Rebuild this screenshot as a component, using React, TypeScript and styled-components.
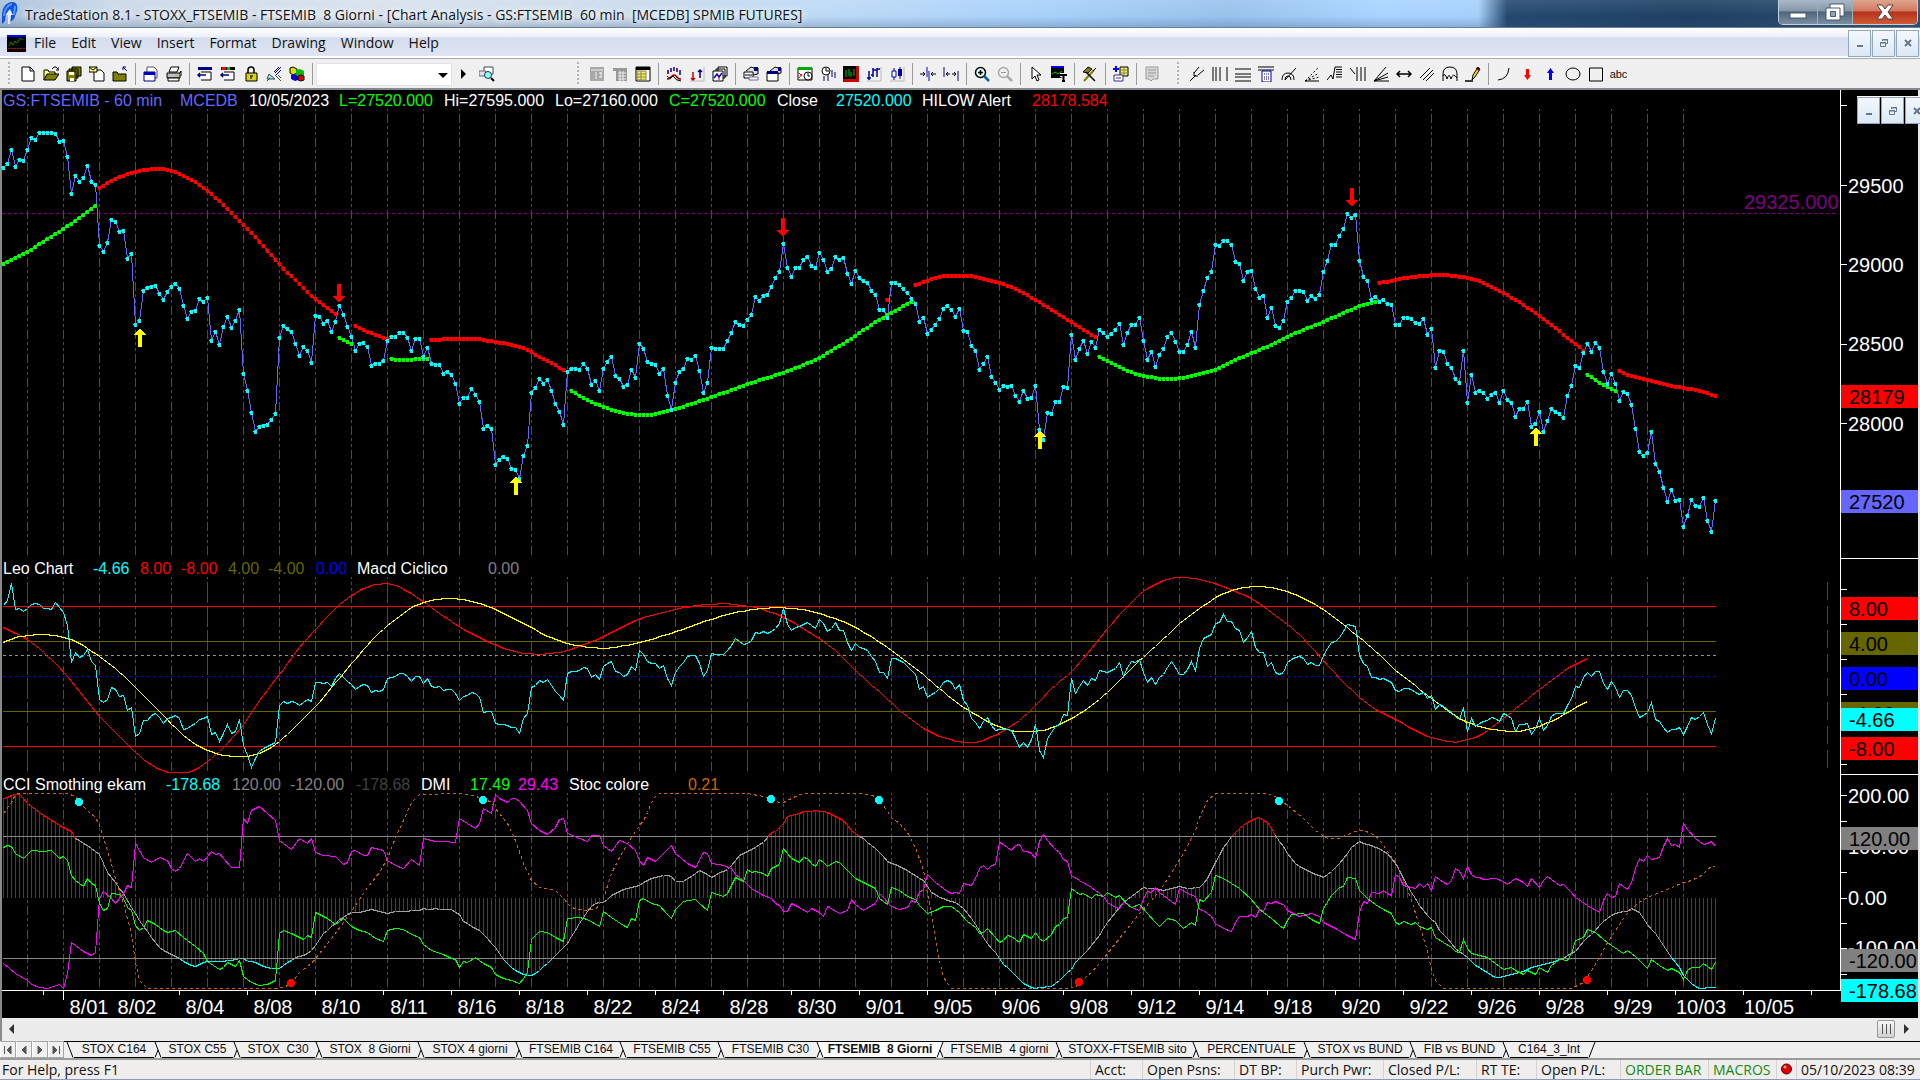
import React from "react";
import styled, { createGlobalStyle, css } from "styled-components";

/* ------------------------------------------------------------------ */
/* Theme values                                                        */
/* ------------------------------------------------------------------ */

const UI_FONT = '"Open Sans", "Noto Sans", sans-serif';
const CHART_FONT = '"Liberation Sans", Arial, sans-serif';

const GlobalStyle = createGlobalStyle`
  *, *::before, *::after { box-sizing: border-box; }
  body { margin: 0; background: #f0f0f0; font-family: ${UI_FONT}; font-size: 14px; color: #111; }
  button, select { font: inherit; color: inherit; border: 0; padding: 0; margin: 0; background: none; }
  svg { display: block; }
`;

/* ------------------------------------------------------------------ */
/* Market data: one value per 60 minute bar                            */
/* ------------------------------------------------------------------ */

const BAR = 4;
const FIRST = 1;
const xOf = (i: number) => FIRST + i * BAR + 0.5;

const nums = (s: string) => s.trim().split(/\s+/).map(Number);

type Knot = [number, number];
const knots = (s: string): Knot[] =>
  s
    .trim()
    .split(/\s+/)
    .map((p) => p.split(":").map(Number) as Knot);

const linear = (k: Knot[]): Knot[] => {
  const out: Knot[] = [];
  for (let n = 0; n < k.length - 1; n++) {
    const [a, va] = k[n];
    const [b, vb] = k[n + 1];
    for (let i = a; i < b; i++) out.push([i, va + ((vb - va) * (i - a)) / (b - a)]);
  }
  out.push(k[k.length - 1]);
  return out;
};

const smooth = (k: Knot[]): Knot[] => {
  if (k.length < 3) return linear(k);
  const slope = k.map((_, n) => {
    const a = k[Math.max(0, n - 1)];
    const b = k[Math.min(k.length - 1, n + 1)];
    return (b[1] - a[1]) / (b[0] - a[0]);
  });
  const out: Knot[] = [];
  const last = k[k.length - 1][0];
  let n = 0;
  for (let i = k[0][0]; i <= last; i++) {
    while (n < k.length - 2 && i > k[n + 1][0]) n++;
    const h = k[n + 1][0] - k[n][0];
    const t = (i - k[n][0]) / h;
    const v =
      (2 * t ** 3 - 3 * t ** 2 + 1) * k[n][1] +
      (t ** 3 - 2 * t ** 2 + t) * h * slope[n] +
      (-2 * t ** 3 + 3 * t ** 2) * k[n + 1][1] +
      (t ** 3 - t ** 2) * h * slope[n + 1];
    out.push([i, v]);
  }
  return out;
};

const CLOSE = nums(`
501 489 447 498 477 480 447 411 417 396 396 396 396 399 422 420 468 579 525 543 531 495 543 552 735 753 726 657 663 693
690 774 759 972 960 870 861 858 855 879 897 873 858 849 864 915 954 933 930 894 903 891 1020 993 1032 977 947 981 960 927
1118 1169 1236 1293 1278 1275 1272 1256 1239 1010 975 983 993 1029 1065 1038 1050 1086 945 948 969 960 993 963 915 942 978 1007 1050 1028
1026 1038 1095 1089 1089 1080 1020 1007 1007 995 995 1010 1050 1014 1014 1068 1040 1089 1092 1092 1119 1113 1122 1149 1209 1191 1191 1164 1182 1202
1284 1275 1284 1392 1377 1368 1374 1404 1407 1434 1365 1335 1175 1161 1134 1149 1137 1169 1209 1233 1272 1113 1104 1104 1107 1089 1104 1152 1140 1170
1104 1083 1068 1125 1134 1158 1152 1107 1131 1029 1044 1083 1089 1092 1119 1104 1185 1227 1146 1113 1104 1074 1077 1065 1110 1176 1146 1041 1044 1044
1044 1020 996 963 972 975 957 942 888 900 885 882 858 831 813 729 801 828 801 801 777 768 795 801 756 777 813 804 768 777
771 819 849 810 831 840 846 870 882 927 927 951 846 846 852 864 876 894 909 963 951 999 987 972 954 924 915 927 948 924
990 993 1035 1050 1107 1089 1068 1128 1146 1167 1155 1158 1155 1185 1203 1170 1194 1191 1155 1287 1317 1236 1239 1203 1203 1158 1161 1002 1077 1044
1020 1059 1023 1041 987 996 1008 999 987 969 1032 996 972 972 951 1020 1077 1053 1098 1062 1044 1008 996 1023 1053 1053 1032 993 1041 912
870 831 813 732 735 720 720 732 783 789 840 813 810 864 891 885 951 921 975 981 960 903 891 870 870 873 900 885 894 882
813 780 732 732 705 684 639 651 642 780 828 840 897 888 903 897 909 912 972 972 950 950 953 966 969 954 1002 984 1101 1050
1053 1089 1101 1134 1146 1050 1206 1122 1176 1170 1176 1194 1182 1176 1206 1170 1197 1206 1248 1224 1224 1203 1278 1269 1233 1293 1260 1224 1233 1239
1251 1185 1155 1095 1101 1056 1029 1053 1026 1041 1113 1149 1119 1149 1200 1173 1179 1212 1284 1353 1365 1356 1293 1389 1413 1461 1503 1467 1500 1497
1578 1545 1497 1515 1518 1491 1560 1593 1500`);

const HILOW: { color: string; k: string }[] = [
  { color: "#00ff00", k: "0:789 6:753 10:722 15:684 19:651 23:615" },
  { color: "#ff0000", k: "24:561 28:534 33:513 38:504 42:510 46:530 51:570 56:624 60:672 65:735 69:790 73:838 78:894 83:939" },
  { color: "#00ff00", k: "84:1010 85:1017 86:1023 87:1029" },
  { color: "#ff0000", k: "88:974 90:987 92:996 94:1005 96:1014" },
  { color: "#00ff00", k: "97:1074 99:1077 102:1077 103:1074 106:1074" },
  { color: "#ff0000", k: "107:1017 109:1017 111:1014 118:1014 123:1023 127:1032 130:1042 134:1068 138:1092 140:1108" },
  {
    color: "#00ff00",
    k: "142:1170 147:1203 152:1226 158:1242 161:1242 163:1239 168:1224 173:1205 180:1176 188:1142 195:1115 200:1092 204:1071 209:1035 213:1005 217:972 222:936 227:903",
  },
  { color: "#ff0000", k: "221:897 221:897" },
  { color: "#ff0000", k: "228:852 233:831 236:825 241:825 245:834 250:850 254:870 258:897 263:933 268:972 273:1008" },
  {
    color: "#00ff00",
    k: "274:1068 277:1085 281:1110 285:1124 290:1134 293:1134 297:1125 303:1107 309:1072 315:1042 321:1008 325:987 330:963 335:936 340:912 343:903",
  },
  { color: "#ff0000", k: "344:846 348:837 352:828 359:822 362:824 366:831 370:846 375:876 380:912 385:953 390:1001 395:1049" },
  { color: "#00ff00", k: "396:1121 398:1137 400:1152 403:1170" },
  { color: "#ff0000", k: "404:1110 407:1125 411:1137 416:1152 420:1161 424:1170 428:1185" },
];

const LEO = nums(`
150 135 83 162 160 167 160 147 145 147 160 160 163 142 157 170 210 322 290 305 300 282 318 330 432 442 433 397 403 423
420 465 455 543 535 495 495 480 475 487 505 490 485 480 490 523 520 510 505 493 489 484 537 530 558 535 508 535 528 493
570 600 637 610 587 580 574 566 560 450 437 443 437 440 450 442 433 438 382 380 385 380 393 370 353 365 377 386 403 393
388 390 412 406 407 403 370 365 363 355 355 362 378 362 362 385 370 394 395 392 405 402 403 415 435 423 420 410 415 425
470 467 467 503 506 506 510 515 517 535 490 475 397 390 375 380 373 390 407 420 436 353 347 347 345 335 340 366 358 372
333 325 317 347 350 363 358 333 345 285 298 318 324 325 338 330 370 390 350 333 322 302 301 300 325 363 345 295 298 296
296 285 270 250 257 267 265 255 232 233 229 235 227 218 205 160 207 226 217 214 207 202 210 220 193 205 228 220 200 225
225 262 285 265 276 278 286 302 318 350 352 370 310 310 315 322 333 345 358 403 393 427 417 410 400 380 375 382 402 388
435 450 490 500 520 497 485 510 526 523 523 523 525 550 575 560 577 553 508 585 607 550 530 513 508 477 481 370 415 392
374 390 370 376 345 349 351 345 338 320 362 335 319 322 312 352 382 367 387 365 357 335 317 337 356 356 343 317 346 280
250 242 237 203 200 178 198 197 218 225 260 245 229 275 292 292 333 322 350 358 350 320 312 305 304 310 328 322 330 331
300 280 260 258 245 228 208 210 214 300 325 332 367 365 373 370 375 380 405 409 398 398 403 412 418 410 430 420 463 448
453 462 470 483 493 455 528 490 512 503 498 495 487 490 497 475 480 490 528 508 508 505 537 520 490 525 510 483 475 473
475 450 430 393 396 367 352 363 347 347 383 401 379 396 427 406 406 420 457 487 481 470 440 492 498 516 532 523 523 515
537 512 486 491 483 472 508 535 488`);

const CYCLE_FAST = knots(`0:216 6:252 11:302 16:363 20:423 24:483 29:543 33:591 37:628 41:650 44:652 47:647 51:618 55:575
60:507 64:436 69:357 74:276 78:222 83:159 87:121 91:95 95:85 98:89 101:108 106:147 110:182 115:221 120:251 123:268 127:286
132:295 137:294 141:284 146:264 150:243 155:212 159:191 163:177 168:162 173:151 180:145 186:152 190:163 195:185 201:227
206:266 211:320 215:367 220:420 225:474 231:526 236:550 241:562 245:554 250:526 254:494 258:450 262:400 267:348 272:280
276:220 281:152 285:109 289:80 293:67 297:68 301:78 306:98 312:130 315:152 318:180 321:207 325:250 330:316 335:380 340:435
344:468 350:505 355:538 360:554 363:560 366:553 370:533 375:490 380:440 385:394 391:340 396:308`);

const CYCLE_SLOW = knots(`0:262 2:251 5:242 9:238 13:240 17:253 20:271 24:304 29:350 33:396 38:456 43:517 48:566 53:593 59:604
63:597 68:567 72:524 78:453 83:382 87:325 92:256 96:211 100:173 103:151 107:134 112:130 116:134 121:152 126:179 132:217
137:247 142:266 147:276 151:278 156:269 160:258 168:229 176:195 183:172 189:160 194:157 200:163 204:175 208:190 213:216
219:260 224:304 230:358 235:409 240:455 246:497 251:522 256:529 260:524 264:507 269:475 274:431 279:375 285:305 290:250
295:194 300:151 304:120 308:102 312:94 315:94 319:101 323:118 326:134 330:163 335:208 340:256 345:308 348:344 352:381
357:430 361:465 365:494 369:513 375:526 379:527 384:512 389:485 393:457 396:438`);

const CCI = linear(
  knots(`0:85 3:72 4:72 6:98 9:127 12:150 15:172 17:182 18:203 21:225 24:252 26:305 28:335 30:370 31:390 33:430 35:468 37:500
39:532 42:552 44:565 46:580 48:589 50:576 51:572 54:573 57:570 60:563 61:572 63:575 65:588 67:595 69:593 71:575 73:562 75:555
77:540 78:525 80:490 82:468 84:448 86:433 87:427 89:427 92:418 94:422 96:430 98:423 104:420 105:413 106:418 108:415 112:417
114:432 115:453 117:467 119:480 121:505 123:530 125:568 127:590 129:607 131:616 132:615 134:600 137:568 140:530 141:518
143:480 145:440 147:408 148:398 150:395 152:376 155:357 159:345 160:335 162:323 165:315 167:317 168:333 170:333 172:317
174:300 175:305 177:321 179:307 181:297 183:270 184:255 187:237 190:215 192:187 193:182 195:160 196:137 198:132 200:123
203:121 206:126 208:138 210:150 212:180 215:205 217:225 219:245 221:272 223:283 226:300 228:315 230:330 232:365 234:380
236:390 238:396 240:415 242:445 244:480 246:520 248:545 249:565 250:582 252:602 255:640 257:650 258:653 260:650 262:648
264:630 266:605 267:597 268:575 271:540 274:495 276:455 278:425 280:397 282:378 284:360 285:352 287:353 290:360 294:349
296:355 298:350 299:350 301:325 303:275 305:232 307:198 309:175 311:155 313:145 314:142 316:155 317:175 319:212 320:228
321:250 323:280 326:300 328:312 330:320 332:303 334:280 336:250 337:230 339:214 341:221 344:235 346:248 348:278 350:323
352:365 354:405 356:435 358:457 359:480 361:503 363:535 366:562 368:585 371:607 373:621 375:619 378:610 380:603 382:590
385:582 387:577 390:563 393:542 395:513 398:480 400:452 402:435 404:425 406:423 407:414 409:427 411:462 413:490 415:525
417:560 419:590 420:615 422:640 424:655 426:650 428:651`)
);

const DMI_MINUS = knots(`0:580 3:610 6:630 7:642 9:650 11:653 14:643 15:655 16:610 17:515 18:525 20:543 22:556 23:545 24:385
25:362 27:383 28:398 30:370 31:345 32:350 33:220 35:260 37:275 39:262 41:270 42:295 43:303 44:295 46:248 48:272 49:265 50:273
52:242 53:252 54:248 55:265 57:290 59:292 60:145 61:160 62:120 64:107 66:130 68:150 69:210 72:236 74:205 76:220 77:205 78:245
80:254 83:257 85:283 86:275 87:243 88:240 90:255 91:255 92:230 95:240 96:270 98:285 100:295 102:268 104:285 105:205 108:212
110:213 113:217 114:145 116:160 118:175 119:160 120:115 122:130 123:72 124:85 126:97 127:83 128:83 129:93 131:120 132:160
134:180 136:193 138:170 139:148 140:145 141:188 144:203 146:213 147:195 149:195 150:225 152:243 154:210 156:220 158:240
159:270 160:285 161:260 163:273 165:248 167:225 168:250 171:280 173:291 175:245 176:250 177:280 180:286 182:295 183:312
185:330 187:355 190:375 192:385 193:400 194:405 195:422 196:422 197:398 199:410 201:426 202:415 204:425 205:438 206:408
209:428 211:420 212:388 213:402 215:421 217:405 218:400 219:368 220:380 222:408 224:418 226:410 227:390 228:395 229:362
230:360 231:312 233:335 236:363 237:370 238:365 239:368 240:338 242:345 243:325 244:293 245:285 246:298 247:285 248:283
249:215 250:222 252:240 253:225 254:222 255:243 256:243 257:250 258:264 259:213 260:193 261:210 263:238 264:245 265:268
266:273 267:315 269:330 272:352 275:378 276:395 278:410 279:413 280:395 281:400 282:410 284:420 285:385 286:363 287:367
288:350 289:365 291:385 293:403 294:353 296:370 298:378 299:418 300:420 302:437 303:460 305:473 307:483 308:455 309:437
311:437 312:432 313:442 314:418 315:423 316:397 317:400 318:392 319:398 320:402 321:420 324:437 327:428 329:438 330:455
333:475 336:495 338:507 339:425 340:393 341:400 342:365 344:368 345:360 346:368 347:375 348:313 349:322 350:345 353:353
354:340 355:350 356:340 357:360 358:317 360:335 361:343 362:330 363:293 364:303 365:325 366:288 367:313 368:320 369:320
370:328 373:323 375:333 376:343 378:323 380:335 381:348 382:325 384:350 385:330 386:317 388:335 389:345 390:343 392:365
393:380 396:405 399:425 400:390 401:370 402:380 403:378 404:340 405:348 406:358 407:335 408:295 409:265 410:273 411:255
412:267 414:260 415:228 416:205 417:225 418:223 419:230 420:160 421:178 423:203 425:222 426:220 427:212 428:227`);

const DMI_PLUS = knots(`0:230 1:225 2:228 3:250 5:263 7:240 10:243 12:240 14:265 15:257 16:270 17:315 18:330 20:347 21:325 22:340
23:345 24:400 25:420 26:415 27:370 29:372 30:385 31:410 32:420 33:465 34:480 35:472 36:450 38:463 40:480 41:487 43:480 45:500
48:528 50:550 51:572 54:598 55:592 56:575 58:587 59:570 60:618 62:635 64:645 66:643 68:630 69:490 70:480 72:488 75:507 76:495
77:500 78:427 81:445 83:463 85:445 87:467 89:480 91:485 93:503 95:512 96:480 98:475 100:478 102:492 104:500 105:523 107:540
110:553 112:565 113:567 114:590 115:573 116:577 118:562 120:580 122:590 123:612 125:625 127:630 129:638 130:625 131:607
132:507 134:483 136:487 138:500 140:512 141:445 144:440 146:447 149:467 150:422 152:440 155:465 156:470 157:445 158:450
159:390 160:385 162:400 164:405 166:432 167:443 168:418 170:393 173:387 174:400 176:421 177:365 180:377 181:370 183:320
185:333 186:298 187:305 188:303 190:310 191:317 192:295 194:283 195:235 196:250 197:265 199:275 200:260 201:265 202:280
203:287 204:268 205:275 206:288 208:273 209:275 211:300 213:325 216:342 218:355 219:385 221:402 222:352 224:360 226:378
228:387 229:405 231:430 233:420 235:407 237:408 239:425 241:453 243:470 244:490 245:487 246:475 248:500 249:515 250:510
251:495 252:497 254:515 255:493 257:505 258:487 259:503 260:513 262:493 263:467 264:463 265:445 266:442 267:353 269:373
270:370 272:383 273:373 275:378 276:367 278:382 279:375 281:403 282:410 284:403 286:430 288:455 289:467 291:443 293:450
295:475 297:455 298:465 299:387 300:393 302:365 303:315 305:325 307:338 309:355 312:388 314:418 317:445 319:465 320:475
321:450 322:432 325:430 327:448 329:460 330:415 332:375 334:350 335:348 336:320 338:323 339:360 341:385 343:403 345:418
347:430 348:455 349:463 350:453 352:462 353:455 354:468 356:477 357:470 358:500 360:515 362:530 363:542 364:545 365:507
366:535 367:548 370:558 371:560 373:580 375:598 377:590 378:600 380:613 381:600 383:613 384:590 386:605 387:585 389:568
391:570 392:550 393:510 395:500 396:477 398:487 400:507 402:525 405:550 406:540 408:557 411:595 412:568 414:585 416:600
417:595 419:605 420:628 421:600 422:590 424:592 425:580 427:598 428:575`);

const STOC = knots(`0:130 2:95 3:72 4:70 16:70 18:78 19:97 21:120 23:140 24:165 26:240 28:325 30:400 32:490 33:575 34:630 36:655
68:655 70:652 72:638 74:605 77:580 79:550 82:505 85:455 88:405 91:350 94:305 96:265 98:200 100:150 102:95 104:71 114:70
117:75 120:83 122:95 123:115 126:160 128:210 130:280 132:330 134:350 138:360 140:385 142:410 145:420 148:418 150:385 152:310
154:260 156:220 159:165 160:150 161:125 162:95 163:78 164:70 186:70 190:77 192:87 194:95 195:97 197:85 199:72 202:70 213:70
216:73 218:77 220:105 222:140 224:160 226:185 228:230 230:300 231:370 232:430 233:500 234:570 235:620 237:655 266:655
268:650 269:637 272:605 275:565 278:520 281:475 284:430 287:390 290:345 292:305 295:250 298:180 299:140 301:90 303:70
316:70 319:83 320:95 322:115 325:145 328:180 331:205 334:203 336:193 338:182 340:180 342:190 344:208 346:242 348:275
350:325 352:390 354:465 356:540 357:600 358:630 360:655 392:655 395:637 397:600 399:560 401:515 403:480 405:445 407:415
409:395 411:380 414:365 417:350 420:337 422:330 425:312 426:295 427:290 428:288`);

/* Each study has its own vertical scale: three data units to a pixel. */
const scale = (offset: number) => (v: number) => Math.round(v / 3 - offset) + 0.5;
const priceY = scale(109);
const leoY = scale(22);
const cciY = scale(23);

const path = (pts: Knot[], y: (v: number) => number) =>
  "M" + pts.map(([i, v]) => `${xOf(i)} ${y(v)}`).join("L");
const indexed = (v: number[]): Knot[] => v.map((n, i) => [i, n]);

const sessions = Array.from({ length: 47 }, (_, n) => 25.5 + n * 36);
const weeks = Array.from({ length: 11 }, (_, n) => 25.5 + n * 180);
const LAST_X = xOf(428);

/* ------------------------------------------------------------------ */
/* Frame                                                               */
/* ------------------------------------------------------------------ */

const Frame = styled.div`
  display: flex;
  flex-direction: column;
  min-height: 100vh;
  overflow: hidden;
`;

const TitleBar = styled.header`
  display: flex;
  align-items: center;
  height: 28px;
  padding-left: 1px;
  border-bottom: 1px solid #6d7f92;
  background: linear-gradient(to bottom, rgba(255, 255, 255, 0.1), transparent 60%, rgba(50, 80, 120, 0.25)),
    linear-gradient(
      to right,
      #a9c0da 0,
      #c9d8e8 6%,
      #d8e2ec 20%,
      #c8daec 34%,
      #bcdaf6 43%,
      #a6d0fa 55%,
      #98c2ec 64%,
      #a8d4ff 72%,
      #a5d0fb 77%,
      #24496e 78.5%,
      #1d4063 88%,
      #2b5070 100%
    );
`;

const AppTitle = styled.h1`
  flex: 1;
  margin: 0;
  padding: 2px 0 0 7px;
  font-size: 14px;
  font-weight: 400;
  line-height: 26px;
  white-space: pre;
  color: #0c1218;
  text-shadow: 0 0 6px #fff, 0 0 8px #fff;
`;

const CaptionGroup = styled.div`
  display: flex;
  align-self: flex-start;
  height: 25px;
  margin-right: 2px;
  border: 1px solid #c4d0da;
  border-top: 0;
  border-radius: 0 0 5px 5px;
  overflow: hidden;
`;

const CaptionButton = styled.button<{ $w: number; $close?: boolean }>`
  display: grid;
  place-items: center;
  width: ${(p) => p.$w}px;
  border-right: 1px solid #9fb0be;
  background: ${(p) =>
    p.$close
      ? "linear-gradient(#e0a48e, #d07a5e 45%, #b5331c 50%, #cf5a34)"
      : "linear-gradient(#a8b8c6, #8598aa 45%, #4e657b 50%, #7b8fa2)"};
  &:last-child { border-right: 0; }
`;

const MenuBar = styled.nav`
  display: flex;
  align-items: center;
  height: 31px;
  padding-left: 7px;
  border-bottom: 1px solid #a7abb2;
  background: linear-gradient(#fff, #eef1f9 28%, #d5dcee 34%, #dfe5f4 94%, #fff 95%);
`;

const MenuList = styled.ul`
  display: flex;
  flex: 1;
  gap: 15px;
  margin: 0;
  padding: 0 0 0 8px;
  list-style: none;
`;

const MenuItem = styled.button`
  line-height: 26px;
`;

const MdiGroup = styled.div<{ $floating?: boolean }>`
  display: flex;
  gap: 1px;
  margin-right: 1px;
  ${(p) =>
    p.$floating &&
    css`
      position: absolute;
      top: 6px;
      right: -11px;
      border-top: 1px solid #fff;
    `}
`;

const MdiButton = styled.button`
  display: grid;
  place-items: center;
  width: 23px;
  height: 27px;
  border: 1px solid #93a7bb;
  background: linear-gradient(#f3f8fd, #dbe9f6);
`;

/* ------------------------------------------------------------------ */
/* Tool bar                                                            */
/* ------------------------------------------------------------------ */

const ToolBar = styled.div`
  display: flex;
  align-items: center;
  height: 31px;
  padding: 2px 0 1px 8px;
  border-bottom: 2px solid #85888c;
  background: #f0f0f0;
`;

const ToolGroup = styled.div<{ $gap?: number }>`
  display: flex;
  align-items: center;
  margin-right: ${(p) => p.$gap ?? 0}px;
`;

const Grip = styled.span`
  width: 4px;
  height: 24px;
  margin-right: 4px;
  background: repeating-linear-gradient(#b4b4b4 0 2px, transparent 2px 4px) 0 0 / 2px 100% no-repeat;
`;

const ToolButton = styled.button`
  display: grid;
  place-items: center;
  width: 23px;
  height: 24px;
`;

const Divider = styled.span`
  width: 1px;
  height: 22px;
  margin: 0 3px 0 4px;
  background: #9a9a9a;
`;

const SymbolBox = styled.label`
  position: relative;
  width: 136px;
  height: 23px;
  select {
    width: 100%;
    height: 100%;
    appearance: none;
    background: #fff;
    border: 1px solid #e2e3ea;
  }
  svg {
    position: absolute;
    top: 10px;
    right: 4px;
    pointer-events: none;
  }
`;

const K = "#000";
const ICONS: Record<string, React.ReactNode> = {
  New: <path d="M2 1h8l4 4v10H2zM10 1v4h4" fill="#fff" stroke={K} />,
  Open: (
    <>
      <path d="M1 14V4h4l1 2h6v2" fill="#ffff80" stroke={K} />
      <path d="M1 14l3-6h12l-4 6z" fill="#808000" stroke={K} />
      <path d="M9 3l2-2h2l2 2M13 4h3V1" fill="none" stroke={K} />
    </>
  ),
  "Save all": (
    <>
      <path d="M6 1h9v9h-9zM3 3h9v9H3z" fill="#808000" stroke={K} />
      <path d="M1 5h9v10H1z" fill="#808000" stroke={K} />
      <path d="M3 6h5v3H3zM4 12h4v3H4z" fill="#fff" />
    </>
  ),
  "New workspace": (
    <>
      <path d="M5 4h7l3 3v8H5z" fill="#fff" stroke={K} />
      <path d="M0 1h8v5H0z" fill="#ffff80" stroke={K} />
      <path d="M0 1l4 3 4-3" fill="none" stroke={K} />
    </>
  ),
  "Close workspace": (
    <>
      <path d="M1 15V6h4l1 2h8v7z" fill="#808000" stroke={K} />
      <path d="M15 5l-4-4M11 1h3M11 1v3" fill="none" stroke="#000080" />
    </>
  ),
  "New window": (
    <>
      <path d="M4 1h7l3 3v8H4z" fill="#fff" stroke="#555" />
      <path d="M1 6h11v9H1z" fill="#fff" stroke="#000080" />
      <path d="M1 6h11v3H1z" fill="#0000c0" />
    </>
  ),
  Print: (
    <>
      <path d="M5 1h8l-2 5H3z" fill="#fff" stroke={K} />
      <path d="M1 7h13v5H1z" fill="#c0c0c0" stroke={K} />
      <path d="M2 12h11v3H2zM14 7l1-2v5" fill="#fff" stroke={K} />
      <path d="M9 10h3" stroke="#c0c000" />
    </>
  ),
  "Insert bar": (
    <>
      <path d="M1 1h14v3H1z" fill="#000080" />
      <path d="M4 6h10v8H4" fill="#fff" stroke={K} />
      <path d="M1 9h8M3 7L1 9l2 2" fill="none" stroke="#000080" strokeWidth="1.5" />
    </>
  ),
  "Insert study": (
    <>
      <path d="M1 1h14v3H1z" fill={K} />
      <path d="M2 1h4v3H2z" fill="#f00" />
      <path d="M7 1h3v3H7z" fill="#0c0" />
      <path d="M4 6h10v8H4" fill="#fff" stroke={K} />
      <path d="M1 9h8M3 7L1 9l2 2" fill="none" stroke="#000080" strokeWidth="1.5" />
    </>
  ),
  Lock: (
    <>
      <path d="M5 7V4q0-3 3-3t3 3v3" fill="none" stroke={K} strokeWidth="1.5" />
      <path d="M3 7h11v8H3z" fill="#d8d020" stroke={K} />
      <path d="M7 10h3M8 10v3" stroke={K} />
    </>
  ),
  Satellite: (
    <>
      <path d="M15 1l-6 6M13 1L8 6M15 4l-5 5" stroke="#000080" />
      <path d="M3 8l6 5H1z" fill="#8ee" stroke="#444" />
      <path d="M1 15l3-3M9 9l6 6M12 9l3 3" stroke="#444" />
    </>
  ),
  "Colour cubes": (
    <>
      <path d="M1 2l3-1 4 2v4L4 9 1 7z" fill="#dd0" stroke={K} />
      <path d="M7 4l4-1 4 2v4l-4 1-4-1z" fill="#0b0" />
      <path d="M2 9l4-1 3 2v4l-3 1-4-2z" fill="#00c" />
      <path d="M9 10l3-1 3 1v4l-3 1-3-1z" fill="#d00" stroke={K} />
    </>
  ),
  "Find symbol": (
    <>
      <path d="M5 1h9v7H5z" fill="#fff" stroke="#445" />
      <path d="M0 5h7v5H0z" fill="#dde" stroke="#667" />
      <circle cx="9" cy="9" r="3.5" fill="#8ff" stroke="#234" />
      <path d="M12 12l3 3" stroke={K} strokeWidth="2" />
    </>
  ),
  "Order ticket": (
    <>
      <path d="M1 1h14v14H1z" fill="#a9a9a9" />
      <path d="M2 4h12M7 6v7M10 7h3M10 11h3M12 6v6" stroke="#eee" />
    </>
  ),
  "Order table": (
    <>
      <path d="M1 2h14v3H1zM4 5h11v10H4z" fill="#999" />
      <path d="M6 7h8M6 10h8M6 13h8M8 5v10M11 5v10" stroke="#eee" />
    </>
  ),
  Matrix: (
    <>
      <path d="M1 1h14v14H1z" fill="#fff" stroke={K} />
      <path d="M1 1h14v3H1z" fill={K} />
      <path d="M2 5h9v9H2z" fill="#f4e960" stroke="#884" />
      <path d="M2 8h9M2 11h9M6 5v9" stroke="#885" />
    </>
  ),
  "Insert indicator": (
    <>
      <path d="M2 4v4M5 2v4M8 1v4M11 2v4M14 4v5" stroke="#0000a0" strokeWidth="1.5" />
      <path d="M2 5v3M11 3v3" stroke="#d00" />
      <path d="M1 13q3 0 5-3 2-2 4 0 2 3 5 3" fill="none" stroke="#a00000" strokeWidth="1.5" />
      <path d="M1 10q3 4 6 0 3 5 8 5" fill="none" stroke={K} />
    </>
  ),
  "Up down": (
    <>
      <path d="M1 15h14V1" fill="none" stroke="#bbb" />
      <path d="M4 6v8M2 12l2 2 2-2" fill="none" stroke="#c00000" strokeWidth="1.5" />
      <path d="M11 12V4M9 6l2-2 2 2" fill="none" stroke="#000080" strokeWidth="1.5" />
    </>
  ),
  "Chart stack": (
    <>
      <path d="M6 1h9v9H6zM4 3h9v9H4z" fill="#fff" stroke={K} />
      <path d="M1 5h10v10H1z" fill="#fff" stroke={K} />
      <path d="M2 12l3-4 2 3 3-4" fill="none" stroke="#0000d0" strokeWidth="1.5" />
      <path d="M7 11v3" stroke="#d00" />
    </>
  ),
  "Format window": (
    <>
      <path d="M3 5l5-4 3 1h4v6l-5 1" fill="#ddd" stroke={K} />
      <path d="M11 1h4v4h-4z" fill="#000080" />
      <path d="M1 6h9v6H1z" fill="#fff" stroke={K} />
      <path d="M2 9h7" stroke={K} />
      <path d="M6 11h9v3H6z" fill="#fff" stroke="#66a" />
    </>
  ),
  "Format study": (
    <>
      <path d="M4 5l5-4 3 1h3v5l-4 1" fill="#ddd" stroke={K} />
      <path d="M12 1h3v4h-3z" fill="#000080" />
      <path d="M1 6h11v9H1z" fill="#fff" stroke={K} />
      <path d="M1 5h11v3H1z" fill="#000080" />
    </>
  ),
  Session: (
    <>
      <path d="M1 2h14v12H1z" fill="#fff" stroke={K} />
      <path d="M1 1h14v3H1z" fill="#0a0" />
      <path d="M2 7l3 3M2 12l3-4" stroke="#d00" />
      <circle cx="11" cy="10" r="4" fill="#fff" stroke={K} />
      <path d="M11 7v3h2" fill="none" stroke={K} />
    </>
  ),
  "Time bars": (
    <>
      <circle cx="6" cy="5" r="4" fill="#fff" stroke={K} />
      <path d="M6 2v3h3" fill="none" stroke={K} />
      <path d="M4 10v5M8 9v6M12 4v7M15 6v6" stroke="#000080" />
    </>
  ),
  "Bar chart": (
    <>
      <path d="M0 0h16v16H0z" fill="#d00000" />
      <path d="M0 0h13v13H0z" fill={K} />
      <path d="M3 4v7M6 3v7M8 6v5M11 3v7" stroke="#0c0" />
    </>
  ),
  "Hi low chart": (
    <>
      <path d="M1 15h14V1" fill="none" stroke="#bbb" />
      <path d="M3 5v9M1 12h4M7 2v9M5 9h2M7 4h4M11 2v9M11 3h3" stroke="#0000a0" strokeWidth="1.5" />
    </>
  ),
  Candles: (
    <>
      <path d="M1 15h14V1" fill="none" stroke="#bbb" />
      <path d="M5 2v12M11 1v12" stroke="#0000a0" />
      <path d="M3 5h4v6H3z" fill="#fff" stroke="#0000a0" />
      <path d="M9 3h4v7H9z" fill="#0000a0" />
    </>
  ),
  "Decrease spacing": (
    <>
      <path d="M7 1v10M9 5v10" stroke="#0000c0" />
      <path d="M0 8h5M3 6l2 2-2 2M16 8h-5M13 6l-2 2 2 2" fill="none" stroke={K} />
    </>
  ),
  "Increase spacing": (
    <>
      <path d="M1 1v10M15 5v10" stroke="#0000c0" />
      <path d="M3 8h4M5 6L3 8l2 2M13 8H9M11 6l2 2-2 2" fill="none" stroke={K} />
    </>
  ),
  "Zoom in": (
    <>
      <circle cx="6.500" cy="6.500" r="5" fill="#dff" stroke={K} strokeWidth="1.5" />
      <path d="M4 6.500h5M6.500 4v5" stroke={K} strokeWidth="1.500" />
      <path d="M10 10l5 5" stroke="#0060a0" strokeWidth="2.500" />
    </>
  ),
  "Zoom out": (
    <>
      <circle cx="6.500" cy="6.500" r="5" fill="#eee" stroke="#aaa" strokeWidth="1.5" />
      <path d="M4 6.500h5" stroke="#999" />
      <path d="M10 10l5 5" stroke="#aaa" strokeWidth="2.500" />
    </>
  ),
  Pointer: <path d="M4 1v12l3-3 2 5 2-1-2-5h4z" fill="#fff" stroke={K} />,
  "Text tool": (
    <>
      <path d="M0 0h13v12H0z" fill={K} />
      <path d="M0 0h13v2H0z" fill="#00f" />
      <path d="M1 8l3-2 3 2 4-3" fill="none" stroke="#0c0" />
      <path d="M9 9h7M12.500 9v6M11 15h3" stroke="#f0f0f0" strokeWidth="4" />
      <path d="M9 9h7M12.500 9v6M11 15h3" stroke={K} strokeWidth="2" />
    </>
  ),
  Build: (
    <>
      <path d="M2 15L12 4" stroke="#808000" strokeWidth="2" />
      <path d="M3 5l10 10" stroke={K} strokeWidth="1.500" />
      <path d="M1 6l5-5 4 2-4 4z" fill="#808000" stroke={K} />
      <path d="M11 5l3-3" stroke={K} />
    </>
  ),
  "Add chart": (
    <>
      <path d="M7 1h8v9H7z" fill="#f4e960" stroke={K} />
      <path d="M8 4h6M8 7h6M11 2v8" stroke="#885" />
      <path d="M1 9h9v6H1z" fill="#fff" stroke="#338" />
      <path d="M3 12h5" stroke="#338" />
      <path d="M3 0v6M0 3h6" stroke="#00f" strokeWidth="2" />
    </>
  ),
  Notes: (
    <>
      <path d="M2 1h12v12H9l-2 2-2-2H2z" fill="#d8d8d8" stroke="#999" />
      <path d="M4 4h8M4 7h8M4 10h6" stroke="#999" />
    </>
  ),
  "Andrews pitchfork": <path d="M1 15l6-6M5 6v4h4M5 7l5-6M9 9l6-5" fill="none" stroke={K} />,
  "Fibonacci time": <path d="M1 1v14M4 1v14M8 1v14M15 1v14" stroke={K} />,
  "Fibonacci levels": <path d="M0 3h16M0 8h16M0 11h16M0 15h16" stroke={K} />,
  Calculator: (
    <>
      <path d="M0 1h16M0 4h16" stroke={K} />
      <path d="M4 5h9v11H4z" fill="#fff" stroke="#0000a0" />
      <path d="M6 8h5M6 11h5M6 13h5" stroke="#0000a0" strokeDasharray="1 1" />
    </>
  ),
  "Speed arcs": <path d="M1 14q0-7 6-7t6 7M4 14q0-4 3-4t3 4M4 14L15 2" fill="none" stroke={K} />,
  "Speed fan": (
    <>
      <path d="M1 15L15 1M1 15l14-8M1 15l14-4" fill="none" stroke={K} strokeDasharray="2 2" />
      <path d="M1 15h14" stroke={K} />
    </>
  ),
  "Price extension": <path d="M0 14l4-5 2 4 2-12M8 1h7M9 3.500h6M9 6h6M9 8.500h6M9 11h6" fill="none" stroke={K} />,
  "Trend projection": <path d="M0 2l5 6M7 1v14M11 1v14M15 1v14" fill="none" stroke={K} />,
  "Gann fan": <path d="M1 15L13 1M1 15l14-8M1 15l14-4M1 15h15" fill="none" stroke={K} />,
  "Horizontal line": <path d="M1 8h14M4 5L1 8l3 3M12 5l3 3-3 3" fill="none" stroke={K} strokeWidth="1.5" />,
  "Parallel lines": <path d="M1 12L11 2M4 14L14 4M7 15l8-8" stroke={K} />,
  "Cycle arcs": <path d="M1 15V8q0-7 7-7t7 7v7M1 10q2-4 4 3 2-7 4 0 2-7 6-1" fill="none" stroke={K} />,
  Pencil: (
    <>
      <path d="M0 15h8" stroke={K} strokeWidth="1.500" />
      <path d="M7 14l1-5 5-8 2 2-5 8z" fill="#e8e020" stroke={K} />
      <path d="M12 1l3 2-1 2-3-2z" fill="#700" />
    </>
  ),
  Arc: <path d="M2 14q10-1 11-12" fill="none" stroke={K} />,
  "Down arrow": <path d="M7 3h3v6h2l-3.500 5L5 9h2z" fill="#f00" />,
  "Up arrow": <path d="M7 14h3V7h2L8.500 2 5 7h2z" fill="#00f" />,
  Ellipse: <ellipse cx="8" cy="8" rx="7" ry="6" fill="none" stroke={K} />,
  Rectangle: <path d="M1.500 2h13v13h-13z" fill="none" stroke={K} />,
};

const AbcLabel = styled.span`
  font-family: ${CHART_FONT};
  font-size: 11px;
  line-height: 16px;
`;

const Tool = ({ name }: { name: string }) => (
  <ToolButton type="button" aria-label={name}>
    {name === "Text" ? (
      <AbcLabel>abc</AbcLabel>
    ) : (
      <svg width="16" height="16" viewBox="0 0 16 16">
        {ICONS[name]}
      </svg>
    )}
  </ToolButton>
);

const Tools = ({ sets }: { sets: string[][] }) => (
  <>
    {sets.map((set, n) => (
      <React.Fragment key={n}>
        {n > 0 && <Divider />}
        {set.map((name) => (
          <Tool key={name} name={name} />
        ))}
      </React.Fragment>
    ))}
  </>
);

const FILE_TOOLS = [
  ["New", "Open", "Save all", "New workspace", "Close workspace"],
  ["New window", "Print"],
  ["Insert bar", "Insert study", "Lock", "Satellite", "Colour cubes"],
];
const CHART_TOOLS = [
  ["Order ticket", "Order table", "Matrix"],
  ["Insert indicator", "Up down", "Chart stack"],
  ["Format window", "Format study"],
  ["Session", "Time bars", "Bar chart", "Hi low chart", "Candles"],
  ["Decrease spacing", "Increase spacing"],
  ["Zoom in", "Zoom out"],
  ["Pointer", "Text tool"],
  ["Build"],
  ["Add chart"],
  ["Notes"],
];
const DRAW_TOOLS = [
  [
    "Andrews pitchfork", "Fibonacci time", "Fibonacci levels", "Calculator", "Speed arcs", "Speed fan", "Price extension",
    "Trend projection", "Gann fan", "Horizontal line", "Parallel lines", "Cycle arcs", "Pencil",
  ],
  ["Arc", "Down arrow", "Up arrow", "Ellipse", "Rectangle", "Text"],
];

/* ------------------------------------------------------------------ */
/* Chart                                                               */
/* ------------------------------------------------------------------ */

const ChartWindow = styled.main`
  position: relative;
  display: grid;
  grid-template-columns: minmax(0, 1fr) 78px;
  border-left: 2px solid #8a8a8a;
  border-right: 2px solid #e8e8e8;
  background: #000;
  font-family: ${CHART_FONT};
`;

const Plots = styled.div`
  min-width: 0;
`;

const Study = styled.section<{ $h: number }>`
  height: ${(p) => p.$h}px;
`;

const Legend = styled.div`
  display: flex;
  height: 19px;
  padding-left: 1px;
  font-size: 16px;
  line-height: 22px;
  white-space: pre;
`;

const Reading = styled.span<{ $w: number; $c: string }>`
  flex: none;
  width: ${(p) => p.$w}px;
  color: ${(p) => p.$c};
`;

const Drawing = styled.svg`
  width: 100%;
  overflow: visible;
  font-family: ${CHART_FONT};
  font-size: 20px;
`;

const Scale = styled.svg`
  width: 78px;
  height: 928px;
  font-family: ${CHART_FONT};
  font-size: 20px;
`;

type Item = [string, number, string];
const LegendRow = ({ items }: { items: Item[] }) => (
  <Legend>
    {items.map(([text, w, c], n) => (
      <Reading key={n} $w={w} $c={c}>
        {text}
      </Reading>
    ))}
  </Legend>
);

const W = "#ffffff";
const PRICE_LEGEND: Item[] = [
  ["GS:FTSEMIB - 60 min", 177, "#6666ff"],
  ["MCEDB", 69, "#6666ff"],
  ["10/05/2023", 90, W],
  ["L=27520.000", 105, "#00ff00"],
  ["Hi=27595.000", 111, W],
  ["Lo=27160.000", 114, W],
  ["C=27520.000", 108, "#00ff00"],
  ["Close", 59, W],
  ["27520.000", 86, "#00ffff"],
  ["HILOW Alert", 110, W],
  ["28178.584", 90, "#ff0000"],
];
const LEO_LEGEND: Item[] = [
  ["Leo Chart", 90, W],
  ["-4.66", 47, "#00ffff"],
  ["8.00", 41, "#ff0000"],
  ["-8.00", 47, "#ff0000"],
  ["4.00", 40, "#666600"],
  ["-4.00", 48, "#666600"],
  ["0.00", 41, "#0000ff"],
  ["Macd Ciclico", 131, W],
  ["0.00", 50, "#808080"],
];
const CCI_LEGEND: Item[] = [
  ["CCI Smothing ekam", 163, W],
  ["-178.68", 66, "#00ffff"],
  ["120.00", 58, "#808080"],
  ["-120.00", 66, "#808080"],
  ["-178.68", 65, "#404040"],
  ["DMI", 49, W],
  ["17.49", 48, "#00ff00"],
  ["29.43", 51, "#ff00ff"],
  ["Stoc colore", 119, W],
  ["0.21", 50, "#cc6600"],
];

const SessionLines = ({ height, offset }: { height: number; offset: number }) => (
  <path
    d={sessions.map((x) => `M${x} 0V${height}`).join("")}
    stroke="#4c4c4c"
    strokeDasharray="9 3 3 3 3 3"
    strokeDashoffset={offset}
    fill="none"
  />
);

/* A bar marker: a 3 by 4 block with a one pixel opening tick on its left. */
const dots = (pts: Knot[]) =>
  pts.map(([i, v]) => `M${xOf(i) - 1.5} ${priceY(v) - 1.5}h3v4h-3v-2h-1v-1h1z`).join("");

const RED_ARROWS = [
  [337, 175],
  [781, 109],
  [1350, 79],
];
const YELLOW_ARROWS = [
  [138, 219],
  [514, 367],
  [1038, 321],
  [1534, 318],
];

const PricePlot = () => (
  <Drawing height={446} shapeRendering="crispEdges">
    <SessionLines height={446} offset={19} />
    <path d="M0 104.500H1833" stroke="#800080" strokeDasharray="3 3" />
    <text x="1742" y="100" fill="#800080">
      29325.000
    </text>
    <path d={path(indexed(CLOSE), priceY)} fill="none" stroke="#6666ff" />
    {HILOW.map(({ color, k }, n) => {
      const pts = smooth(knots(k));
      return (
        <g key={n}>
          <path d={path(pts, priceY)} fill="none" stroke={color} />
          <path d={dots(pts)} fill={color} />
        </g>
      );
    })}
    <path d={dots(indexed(CLOSE))} fill="#00ffff" />
    {RED_ARROWS.map(([x, y]) => (
      <path key={x} d={`M${x - 2} ${y}h4v12h4l-6 7l-6 -7h4z`} fill="#ff0000" />
    ))}
    {YELLOW_ARROWS.map(([x, y]) => (
      <path key={x} d={`M${x - 2} ${y + 19}h4v-12h4l-6 -7l-6 7h4z`} fill="#ffff00" />
    ))}
  </Drawing>
);

const LeoPlot = () => (
  <Drawing height={195} shapeRendering="crispEdges" fill="none">
    <SessionLines height={194} offset={7} />
    <path d={weeks.map((x) => `M${x} 5V191`).join("")} stroke="#006666" strokeDasharray="18 6" />
    <path d={`M1 29.500H${LAST_X}M1 169.500H${LAST_X}`} stroke="#ff0000" />
    <path d={`M1 64.500H${LAST_X}M1 134.500H${LAST_X}`} stroke="#666600" />
    <path d={`M1 78.500H${LAST_X}`} stroke="#909090" strokeDasharray="3 3" />
    <path d={`M1 99.500H${LAST_X}`} stroke="#0000ff" strokeDasharray="3 3" />
    <path d={path(smooth(CYCLE_FAST), leoY)} stroke="#ff0000" />
    <path d={path(smooth(CYCLE_SLOW), leoY)} stroke="#ffff00" />
    <path d={path(indexed(LEO), leoY)} stroke="#00ffff" />
  </Drawing>
);

const zone = (v: number) => (v < 200 ? "#ff0000" : v > 567 ? "#00ffff" : "#a0a0a0");
const SIGNALS: [number, number, string][] = [
  [77, 9, "#00ffff"],
  [481, 7, "#00ffff"],
  [769, 6, "#00ffff"],
  [877, 7, "#00ffff"],
  [1277, 8, "#00ffff"],
  [289, 190, "#ff0000"],
  [1077, 189, "#ff0000"],
  [1585, 187, "#ff0000"],
];

const CciPlot = () => (
  <Drawing height={197} shapeRendering="crispEdges" fill="none">
    <SessionLines height={194} offset={7} />
    <path d={CCI.map(([i, v]) => `M${xOf(i)} 105V${cciY(v)}`).join("")} stroke="#404040" />
    <path d={`M1 43.500H${LAST_X}M1 165.500H${LAST_X}`} stroke="#888" />
    <path d={path(STOC, cciY)} stroke="#cc6600" strokeDasharray="3 3" />
    {CCI.slice(1).map(([i, v], n) => (
      <path key={i} d={path([CCI[n], [i, v]], cciY)} stroke={zone((v + CCI[n][1]) / 2)} />
    ))}
    <path d={path(DMI_MINUS, cciY)} stroke="#ff00ff" />
    <path d={path(DMI_PLUS, cciY)} stroke="#00ff00" />
    {SIGNALS.map(([x, y, c]) => (
      <circle key={x} cx={x} cy={y} r="4" fill={c} />
    ))}
  </Drawing>
);

const DATES = [
  "8/04", "8/08", "8/10", "8/11", "8/16", "8/18", "8/22", "8/24", "8/28", "8/30", "9/01", "9/05", "9/06", "9/08", "9/12",
  "9/14", "9/18", "9/20", "9/22", "9/26", "9/28", "9/29", "10/03", "10/05",
];

const TimeAxis = () => (
  <Drawing height={28} fill={W} textAnchor="middle">
    <path
      d={`M0 .5H1838M41.500 0v5M61.500 0v10${Array.from({ length: 25 }, (_, k) => `M${177.5 + 68 * k} 0v5`).join("")}`}
      stroke={W}
      shapeRendering="crispEdges"
    />
    <text x="87" y="24">8/01</text>
    <text x="135" y="24">8/02</text>
    {DATES.map((d, k) => (
      <text key={d} x={203 + 68 * k} y="24">
        {d}
      </text>
    ))}
  </Drawing>
);

const Tag = ({ y, fill, children }: { y: number; fill: string; children: string }) => (
  <>
    <rect x="1" y={y} width="77" height="23" fill={fill} />
    <text x="9" y={y + 19}>
      {children}
    </text>
  </>
);

const PRICE_TICKS = [15, 95, 174, 254, 333, 499, 534, 569, 604, 674, 705, 731, 782, 808, 833, 858, 884];
const AXIS_LABELS: [string, number][] = [
  ["29500", 103],
  ["29000", 182],
  ["28500", 261],
  ["28000", 341],
  ["200.00", 713],
  ["100.00", 764],
  ["0.00", 815],
  ["-100.00", 865],
];

const PriceScale = () => (
  <Scale>
    <g shapeRendering="crispEdges" stroke={W}>
      <path d={`M.5 0V901M-1 468.500H80M-1 684.500H80${PRICE_TICKS.map((y) => `M1 ${y + 0.5}h6`).join("")}`} />
    </g>
    <g fill={W}>
      {AXIS_LABELS.map(([t, y]) => (
        <text key={t} x="8" y={y}>
          {t}
        </text>
      ))}
    </g>
    <Tag y={295} fill="#ff0000">28179</Tag>
    <Tag y={400} fill="#6666ff">27520</Tag>
    <Tag y={507} fill="#ff0000">8.00</Tag>
    <Tag y={542} fill="#666600">4.00</Tag>
    <Tag y={577} fill="#0000ff">0.00</Tag>
    <Tag y={612} fill="#666600">-4.00</Tag>
    <Tag y={618} fill="#00ffff">-4.66</Tag>
    <Tag y={647} fill="#ff0000">-8.00</Tag>
    <Tag y={737} fill="#808080">120.00</Tag>
    <Tag y={859} fill="#808080">-120.00</Tag>
    <Tag y={889} fill="#00ffff">-178.68</Tag>
  </Scale>
);

/* ------------------------------------------------------------------ */
/* Scroll bar, workspace tabs, status bar                              */
/* ------------------------------------------------------------------ */

const ScrollRow = styled.div`
  display: flex;
  align-items: center;
  justify-content: space-between;
  height: 23px;
  padding: 0 10px 2px 7px;
  border-left: 2px solid #8a8a8a;
  background: #ececec;
`;

const ScrollEnd = styled.div`
  display: flex;
  align-items: center;
  gap: 9px;
`;

const Thumb = styled.button`
  display: grid;
  place-items: center;
  width: 18px;
  height: 18px;
  border: 1px solid #979797;
  border-radius: 2px;
  background: linear-gradient(#f6f6f6, #d2d2d6);
`;

const TabRow = styled.div`
  display: flex;
  height: 19px;
  border-bottom: 2px solid #9a9a9a;
  background: #f0f0f0;
`;

const TabNav = styled.button`
  display: grid;
  place-items: center;
  width: 16px;
  border: 1px solid #a6a6a6;
  border-left-color: #fff;
`;

const TabList = styled.div`
  display: flex;
  flex: 1;
  padding-left: 2px;
  border-top: 1px solid #000;
  font-family: ${CHART_FONT};
  font-size: 12px;
`;

const Tab = styled.button<{ $w: number; $on?: boolean }>`
  width: ${(p) => p.$w - 8}px;
  height: 16px;
  line-height: 15px;
  white-space: pre;
  border-bottom: 1px solid #000;
  background: ${(p) => (p.$on ? "#fff" : "#f0f0f0")};
  font-weight: ${(p) => (p.$on ? 700 : 400)};
`;

const StatusBar = styled.footer`
  display: flex;
  height: 20px;
  border-bottom: 1px solid #8c9ab8;
  background: #f0eded;
  line-height: 20px;
`;

const StatusText = styled.span`
  flex: 1;
  padding-left: 2px;
`;

const StatusCell = styled.span<{ $w: number; $c?: string }>`
  display: flex;
  align-items: center;
  width: ${(p) => p.$w}px;
  padding-left: 4px;
  border-left: 1px solid #d4d2d2;
  color: ${(p) => p.$c ?? "inherit"};
  white-space: nowrap;
`;

const TABS: [string, number][] = [
  ["STOX C164", 88],
  ["STOX C55", 79],
  ["STOX  C30", 82],
  ["STOX  8 Giorni", 102],
  ["STOX 4 giorni", 98],
  ["FTSEMIB C164", 104],
  ["FTSEMIB C55", 98],
  ["FTSEMIB C30", 99],
  ["FTSEMIB  8 Giorni", 120],
  ["FTSEMIB  4 giorni", 119],
  ["STOXX-FTSEMIB sito", 137],
  ["PERCENTUALE", 111],
  ["STOX vs BUND", 106],
  ["FIB vs BUND", 93],
  ["C164_3_Int", 86],
];
const ACTIVE = 8;

const TabEdge = ({ n }: { n: number }) => (
  <svg width="8" height="16" viewBox="0 0 8 16">
    {n === ACTIVE && <path d="M0 0l6 15.500h2V0z" fill="#fff" />}
    {n === ACTIVE + 1 && <path d="M0 0v15.500h2L8 0z" fill="#fff" />}
    {n !== ACTIVE + 1 && n < TABS.length && <path d="M1 0l6 15.500" stroke="#000" />}
    {n > 0 && n !== ACTIVE && <path d={n === ACTIVE + 1 || n === TABS.length ? "M7 0L1 15.500" : "M4 8L1 15.500"} stroke="#000" />}
    {n === ACTIVE && <path d="M4 8L1 15.500" stroke="#000" />}
    {n === ACTIVE + 1 && <path d="M4 8l3 7.500" stroke="#000" />}
  </svg>
);

const MdiButtons = ({ floating }: { floating?: boolean }) => (
  <MdiGroup $floating={floating}>
    <MdiButton type="button" aria-label="Minimize chart">
      <svg width="10" height="10"><path d="M2 8h6" stroke="#667788" strokeWidth="2" /></svg>
    </MdiButton>
    <MdiButton type="button" aria-label="Restore chart">
      <svg width="10" height="10" fill="none" stroke="#667788">
        <path d="M3.500 3V1.500h5v4H7M1.500 4.500h5v4h-5zM1 5h6M3 2h6" />
      </svg>
    </MdiButton>
    <MdiButton type="button" aria-label="Close chart">
      <svg width="10" height="10"><path d="M2 2l6 6M8 2L2 8" stroke="#667788" strokeWidth="2" /></svg>
    </MdiButton>
  </MdiGroup>
);

export default function App() {
  return (
    <Frame>
      <GlobalStyle />
      <TitleBar>
        <svg width="17" height="24" viewBox="0 0 17 24">
          <path d="M1 22V13C1 5 6 0 11 0c5 0 6 4 5 9l-3 8-4 3 1-10-2-2-3 4-1 7z" fill="#1450d8" />
          <path d="M3 14C3 7 7 3 11 2M14 4l-1 9" stroke="#4e9cff" strokeWidth="2" fill="none" />
          <path d="M7 22V13H5l4-6 3 6h-2l-1 9z" fill="#dfeafa" />
        </svg>
        <AppTitle>
          {"TradeStation 8.1 - STOXX_FTSEMIB - FTSEMIB  8 Giorni - [Chart Analysis - GS:FTSEMIB  60 min  [MCEDB] SPMIB FUTURES]"}
        </AppTitle>
        <CaptionGroup>
          <CaptionButton type="button" $w={39} aria-label="Minimize">
            <svg width="18" height="16"><rect x="1" y="9" width="16" height="5" fill="#fff" stroke="#4a5968" /></svg>
          </CaptionButton>
          <CaptionButton type="button" $w={35} aria-label="Restore">
            <svg width="20" height="18" stroke="#4a5968">
              <path d="M5 1h14v12H5z" fill="#fff" />
              <path d="M1 5h14v12H1z" fill="#fff" />
              <path d="M5.500 8.500h5v5h-5z" fill="#8fa5b8" />
            </svg>
          </CaptionButton>
          <CaptionButton type="button" $w={64} $close aria-label="Close">
            <svg width="20" height="18">
              <path d="M2 2h5l3 4 3-4h5l-5 7 5 7h-5l-3-4-3 4H2l5-7z" fill="#fff" stroke="#5b4444" />
            </svg>
          </CaptionButton>
        </CaptionGroup>
      </TitleBar>

      <MenuBar>
        <svg width="19" height="17" viewBox="0 0 19 17">
          <path d="M0 0h19v17H0z" />
          <path d="M0 0h19v2H0z" fill="#0000ff" />
          <path d="M2 11l2-4 2 3 2-4 2 2 3-5 3 2" stroke="#008800" fill="none" />
          <path d="M1 13.500h17" stroke="#cc0000" strokeDasharray="2 1" />
        </svg>
        <MenuList>
          {["File", "Edit", "View", "Insert", "Format", "Drawing", "Window", "Help"].map((m) => (
            <li key={m}>
              <MenuItem type="button">{m}</MenuItem>
            </li>
          ))}
        </MenuList>
        <MdiButtons />
      </MenuBar>

      <ToolBar>
        <ToolGroup $gap={79}>
          <Grip />
          <Tools sets={FILE_TOOLS} />
          <Divider />
          <SymbolBox>
            <select aria-label="Symbol" />
            <svg width="10" height="5"><path d="M0 0h10L5 5z" /></svg>
          </SymbolBox>
          <ToolButton type="button" aria-label="Go to symbol">
            <svg width="6" height="10"><path d="M0 0v10l5-5z" /></svg>
          </ToolButton>
          <Tool name="Find symbol" />
        </ToolGroup>
        <ToolGroup $gap={14}>
          <Grip />
          <Tools sets={CHART_TOOLS} />
        </ToolGroup>
        <ToolGroup>
          <Grip />
          <Tools sets={DRAW_TOOLS} />
        </ToolGroup>
      </ToolBar>

      <ChartWindow>
        <Plots>
          <Study $h={468}>
            <LegendRow items={PRICE_LEGEND} />
            <PricePlot />
          </Study>
          <Study $h={216}>
            <LegendRow items={LEO_LEGEND} />
            <LeoPlot />
          </Study>
          <Study $h={216}>
            <LegendRow items={CCI_LEGEND} />
            <CciPlot />
          </Study>
          <TimeAxis />
        </Plots>
        <PriceScale />
        <MdiButtons floating />
      </ChartWindow>

      <ScrollRow>
        <button type="button" aria-label="Scroll left">
          <svg width="6" height="10"><path d="M5 0v10L0 5z" fill="#333" /></svg>
        </button>
        <ScrollEnd>
          <Thumb type="button" aria-label="Scroll position">
            <svg width="10" height="10"><path d="M1.500 0v10M5.500 0v10M9.500 0v10" stroke="#555" /></svg>
          </Thumb>
          <button type="button" aria-label="Scroll right">
            <svg width="6" height="10"><path d="M0 0v10l5-5z" fill="#333" /></svg>
          </button>
        </ScrollEnd>
      </ScrollRow>

      <TabRow>
        {["M1.500 1v8M8 1v8L4 5z", "M7 1v8L3 5z", "M3 1v8l4-4z", "M8.500 1v8M2 1v8l4-4z"].map((d, n) => (
          <TabNav key={n} type="button" aria-label={["First tab", "Previous tab", "Next tab", "Last tab"][n]}>
            <svg width="10" height="10"><path d={d} fill="#555" stroke="#555" strokeWidth="1" /></svg>
          </TabNav>
        ))}
        <TabList>
          {TABS.map(([name, w], n) => (
            <React.Fragment key={name}>
              <TabEdge n={n} />
              <Tab type="button" $w={w} $on={n === ACTIVE}>
                {name}
              </Tab>
            </React.Fragment>
          ))}
          <TabEdge n={TABS.length} />
        </TabList>
      </TabRow>

      <StatusBar>
        <StatusText>For Help, press F1</StatusText>
        <StatusCell $w={52}>Acct:</StatusCell>
        <StatusCell $w={92}>Open Psns:</StatusCell>
        <StatusCell $w={62}>DT BP:</StatusCell>
        <StatusCell $w={87}>Purch Pwr:</StatusCell>
        <StatusCell $w={93}>Closed P/L:</StatusCell>
        <StatusCell $w={60}>RT TE:</StatusCell>
        <StatusCell $w={84}>Open P/L:</StatusCell>
        <StatusCell $w={88} $c="#138a13">ORDER BAR</StatusCell>
        <StatusCell $w={68} $c="#138a13">MACROS</StatusCell>
        <StatusCell $w={20}>
          <svg width="11" height="13">
            <circle cx="5.500" cy="6" r="5" fill="#e00000" stroke="#400" />
            <circle cx="4" cy="4" r="1.500" fill="#ff9a9a" />
          </svg>
        </StatusCell>
        <StatusCell $w={124}>05/10/2023 08:39</StatusCell>
      </StatusBar>
    </Frame>
  );
}
